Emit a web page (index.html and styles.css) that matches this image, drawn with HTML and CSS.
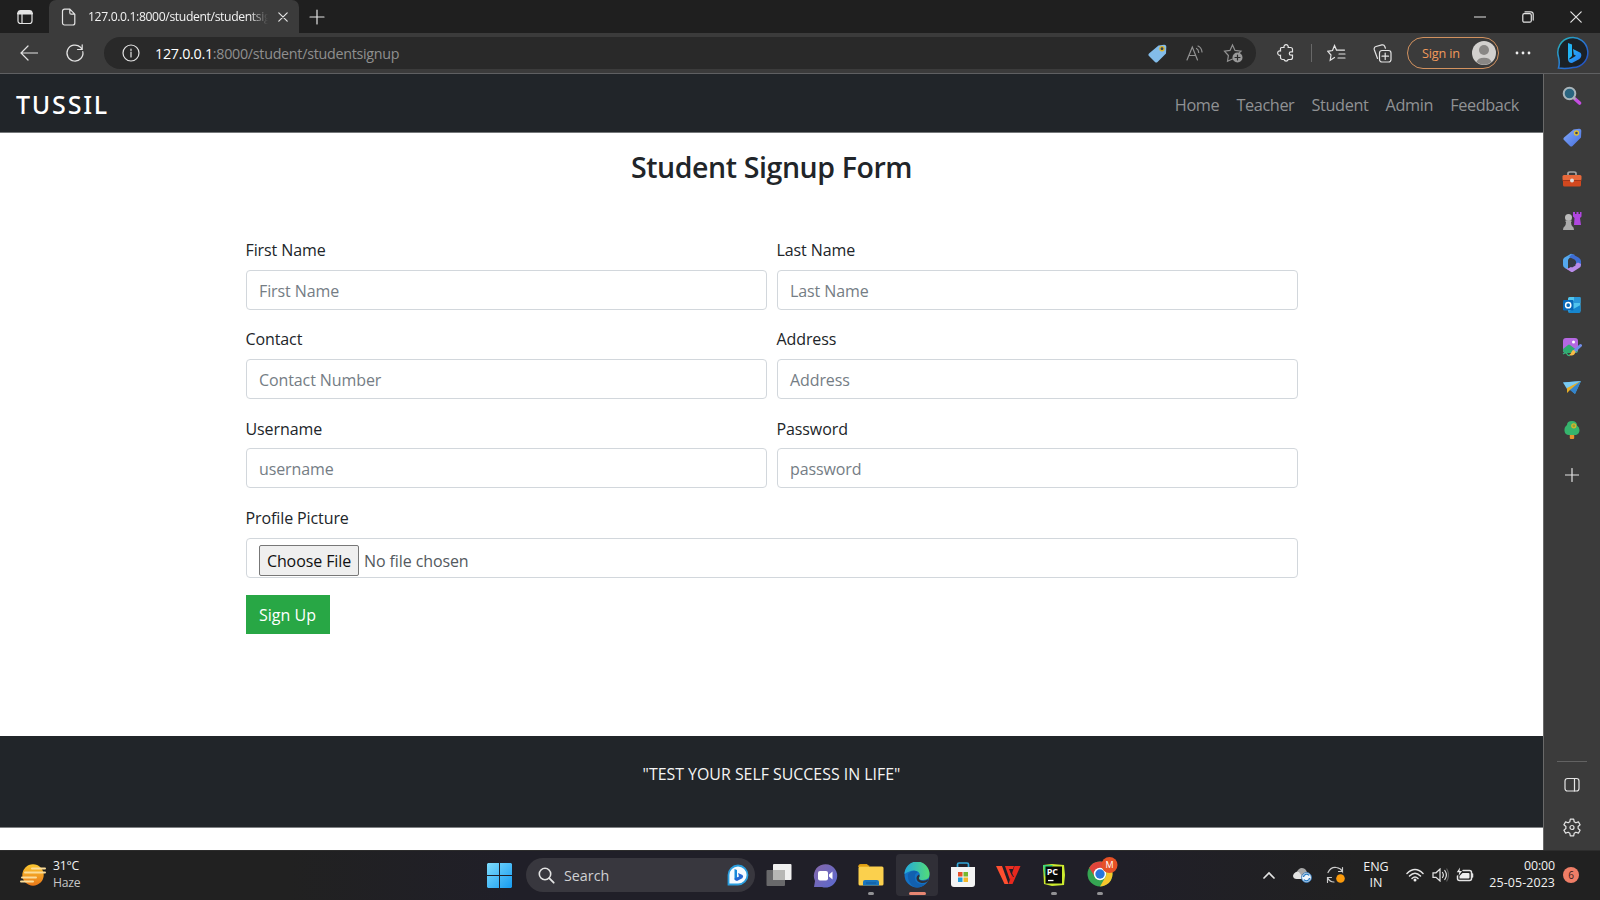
FILE: index.html
```html
<!DOCTYPE html>
<html lang="en">
<head>
<meta charset="utf-8">
<title>Student Signup</title>
<link rel="stylesheet" href="styles.css">
</head>
<body>
<div class="screen">
  <header class="titlebar">
    <div class="workspace"><svg width="18" height="18" viewBox="0 0 18 18" class="line"><rect x="2" y="2.500" width="14" height="13" rx="2.500"/><path d="M2 5.500h14M3 4h12" stroke-width="2"/><path d="M6 6v9"/></svg></div>
    <div class="tab">
      <svg width="16" height="18" viewBox="0 0 16 18" class="line"><path d="M3.500 1.200h5.300l5 5v8.800a2 2 0 0 1-2 2H3.500a2 2 0 0 1-2-2V3.200a2 2 0 0 1 2-2zM8.800 1.400v3.300a1.500 1.500 0 0 0 1.500 1.500h3.400"/></svg>
      <span class="tab-title">127.0.0.1:8000/student/studentsignup</span>
      <svg width="10" height="10" viewBox="0 0 10 10" class="line"><path d="M.8.8l8.400 8.400M9.200.8L.8 9.200"/></svg>
    </div>
    <svg class="newtab line" width="16" height="16" viewBox="0 0 16 16"><path d="M8 1v14M1 8h14"/></svg>
    <div class="caption">
      <span><svg width="12" height="12" viewBox="0 0 12 12" class="line"><path d="M.5 6h11"/></svg></span>
      <span><svg width="12" height="12" viewBox="0 0 12 12" class="line"><rect x=".8" y="2.700" width="8.500" height="8.500" rx="1.500"/><path d="M3 .9h6a2.200 2.200 0 0 1 2.200 2.200v6"/></svg></span>
      <span><svg width="12" height="12" viewBox="0 0 12 12" class="line"><path d="M.8.8l10.400 10.400M11.200.8L.8 11.200"/></svg></span>
    </div>
  </header>

  <div class="toolbar">
    <span class="tool back"><svg width="18" height="16" viewBox="0 0 18 16" class="line"><path d="M17.500 8H1M8 1L1 8l7 7"/></svg></span>
    <span class="tool reload"><svg width="20" height="20" viewBox="0 0 20 20" class="line"><path d="M17.800 8.500A8 8 0 1 1 15.500 4.300L17 6M17.200 1.800V6.500H12.500"/></svg></span>
    <div class="address">
      <svg width="18" height="18" viewBox="0 0 18 18" class="line"><circle cx="9" cy="9" r="8"/><path d="M9 8v5M9 5v1.500"/></svg>
      <span class="url"><b>127.0.0.1</b>:8000/student/studentsignup</span>
      <div class="address-icons">
        <span><svg width="19" height="19" viewBox="0 0 19 19"><path d="M10.500 1.500L16 .8a2 2 0 0 1 2.300 2.200L18 9.500 9.500 18a1.800 1.800 0 0 1-2.500 0L1 12a1.800 1.800 0 0 1 0-2.500z" fill="#83bce9"/><circle cx="14" cy="4.700" r="2.100" fill="#2c4255" stroke="#e0b52c" stroke-width="1.300"/></svg></span>
        <span><svg width="18" height="18" viewBox="0 0 18 18" class="line dim"><path d="M1 16L6.300 3 11.500 16M3 11.500h6.800M10.500 4.500q2 1 2.200 4M12 2q3.500 1.500 4 6"/></svg></span>
        <span><svg width="20" height="20" viewBox="0 0 20 20" class="line dim"><path d="M9.500 16l-5 2.200.9-5.700L1.500 8.200l5.500-.8L9.500 2 12 7.400l6 .8-2 2"/><circle cx="14.500" cy="14.500" r="5" fill="#999" stroke="none"/><path d="M14.500 12v5M12 14.500h5" stroke="#292929"/></svg></span>
      </div>
    </div>
    <span class="tool ext"><svg width="18" height="18" viewBox="0 0 18 18" class="line"><path d="M4.500 3.500H7a2.200 2.200 0 1 1 4.200 0h2.300a2 2 0 0 1 2 2v2.300H14a1.700 1.700 0 0 0 0 3.400h1.500v2.300a2 2 0 0 1-2 2h-2.300a2.200 2.200 0 0 1-4.200 0H5.500a2 2 0 0 1-2-2v-2.300a2.200 2.200 0 1 1 0-4.200V4.500a1 1 0 0 1 1-1z"/></svg></span>
    <i class="sep"></i>
    <span class="tool fav"><svg width="19" height="18" viewBox="0 0 19 18" class="line"><path d="M7.500 13.500l-4.300 2.700.8-5.200L.8 7.300l4.700-.8L7.500 1.500l2 4.600h8M12 10h6M11 14h7"/></svg></span>
    <span class="tool coll"><svg width="19" height="19" viewBox="0 0 19 19" class="line"><rect x="6.500" y="6.500" width="11.500" height="11.500" rx="2.500"/><path d="M12.200 9v6.500M9 12.200h6.500M4.500 14.500L1.300 5.700a2.500 2.500 0 0 1 1.700-3.200l5.800-1.600a2.500 2.500 0 0 1 3 1.600l.6 1.700"/></svg></span>
    <div class="signin"><span>Sign in</span>
      <svg width="24" height="24" viewBox="0 0 24 24"><circle cx="12" cy="12" r="12" fill="#d2d0ce"/><circle cx="12" cy="9" r="5" fill="#898785"/><path d="M4.500 21a7.700 5.500 0 0 1 15 0A12 12 0 0 1 4.500 21z" fill="#898785"/></svg></div>
    <span class="tool dots"><svg width="16" height="4" viewBox="0 0 16 4" fill="#eee"><circle cx="2" cy="2" r="1.400"/><circle cx="8" cy="2" r="1.400"/><circle cx="14" cy="2" r="1.400"/></svg></span>
    <span class="tool bing"><svg width="32" height="34" viewBox="0 0 32 34"><defs><linearGradient id="ring" x2="1" y2="1"><stop stop-color="#28bbb9"/><stop offset=".5" stop-color="#2878d3"/><stop offset="1" stop-color="#2148bd"/></linearGradient><linearGradient id="bb" x2="1" y2="1"><stop stop-color="#25b9fa"/><stop offset="1" stop-color="#277af0"/></linearGradient></defs><path d="M1.500 32Q3 27 1.500 21A15 15 0 1 1 16 31.500Q9 33 1.500 32z" fill="#1b2127" stroke="url(#ring)" stroke-width="1.500"/><path d="M11 7l4 1.500v11.500l-4 4z" fill="#21b4f5"/><path d="M16 13l7 3.500q2 1.500 1 4.500-.7 1.500-2 2.300L15 27q-4 0-4-4.200 1.500 1 4-.6l4-2.400-2.200-1.400z" fill="url(#bb)"/></svg></span>
  </div>

  <div class="middle">
    <main class="page">
      <nav class="navbar">
        <span class="brand">TUSSIL</span>
        <div class="links"><a>Home</a><a>Teacher</a><a>Student</a><a>Admin</a><a>Feedback</a></div>
      </nav>
      <section class="content">
        <h3>Student Signup Form</h3>
        <form class="form">
          <div class="group"><label>First Name</label><div class="input">First Name</div></div>
          <div class="group"><label>Last Name</label><div class="input">Last Name</div></div>
          <div class="group"><label>Contact</label><div class="input">Contact Number</div></div>
          <div class="group"><label>Address</label><div class="input">Address</div></div>
          <div class="group"><label>Username</label><div class="input">username</div></div>
          <div class="group"><label>Password</label><div class="input">password</div></div>
          <div class="group wide"><label>Profile Picture</label><div class="input file"><span class="choose">Choose File</span><span class="nofile">No file chosen</span></div></div>
          <div class="submit">Sign Up</div>
        </form>
      </section>
      <footer class="footer">"TEST YOUR SELF SUCCESS IN LIFE"</footer>
    </main>
    <aside class="sidebar">
      <span><svg width="20" height="20" viewBox="0 0 20 20"><path d="M13 13l4.500 4" stroke="#c44ce0" stroke-width="3.600" stroke-linecap="round"/><path d="M11.500 11.500l2 2" stroke="#aaa" stroke-width="2"/><circle cx="7.500" cy="7.500" r="5.800" fill="#2a6580" stroke="#a9b5bb" stroke-width="2"/></svg></span>
      <span><svg width="19" height="19" viewBox="0 0 19 19"><defs><linearGradient id="tg" x2="1" y2="1"><stop stop-color="#83a9fa"/><stop offset="1" stop-color="#4770dd"/></linearGradient></defs><path d="M10.500 1.500L16 .8a2 2 0 0 1 2.300 2.200L18 9.500 9.500 18a1.800 1.800 0 0 1-2.500 0L1 12a1.800 1.800 0 0 1 0-2.500z" fill="url(#tg)"/><circle cx="13.500" cy="5" r="2" fill="#384164" stroke="#dfc02f" stroke-width="1.400"/></svg></span>
      <span><svg width="20" height="18" viewBox="0 0 20 18"><path d="M6 5V3.500Q6 2 8 2h4q2 0 2 1.500V5" fill="none" stroke="#a4a4a4" stroke-width="1.700"/><rect x="1" y="8" width="18" height="8.500" rx="1.500" fill="#d2481f"/><rect x=".5" y="5" width="19" height="5.500" rx="1.500" fill="#e8683a"/><rect x=".5" y="10" width="19" height="1" fill="#a5361a"/><circle cx="10" cy="10.500" r="2" fill="#ddd"/></svg></span>
      <span><svg width="20" height="20" viewBox="0 0 20 20"><path d="M11 1h2v2h1.500V1h2v2H18V1h1.500v4.500L18 7l1 7h-7l.5-7L11 5.500z" fill="#b046e0"/><circle cx="6.500" cy="6.500" r="3.500" fill="#bbb"/><path d="M3.500 9.500h6v1.500H9q0 3 1.500 4.500 1.500.5 1.500 3.500H1q0-3 1.500-3.500Q4 14 4 11h-.5z" fill="#aaa"/></svg></span>
      <span><svg width="20" height="20" viewBox="0 0 20 20"><path d="M9 .8L2.500 4.500Q1 5.500 1 7v5q0 2 2 3l3 1.500V7.500Q6 6 7.500 5L13 2z" fill="#54a8ee"/><path d="M10 1l6.500 3.500Q19 6 19 8v5l-5 3V9q0-1.500-1.500-2.500L7 4z" fill="#3e6dd4"/><path d="M19 11q0 3-2 4l-5.500 3.500q-1.500 1-3 0L3 15q3 1 5-.5l8-5z" fill="#b98be9"/><path d="M10 6.500l3.500 2v4L10 14.500l-3.500-2v-4z" fill="#343a45"/></svg></span>
      <span><svg width="18" height="18" viewBox="0 0 18 18"><rect x="5" y="1" width="12.500" height="15" rx="1.500" fill="#50c4ee"/><path d="M11 1h6.500v6H11z" fill="#2997d9"/><path d="M5 16l12.500-7v6.500q0 1.500-1.500 1.500H6z" fill="#1686ce"/><rect x="0" y="4" width="10.500" height="10.500" rx="1.200" fill="#0869b9"/><circle cx="5.200" cy="9.200" r="2.600" fill="none" stroke="#fff" stroke-width="1.500"/></svg></span>
      <span><svg width="20" height="20" viewBox="0 0 20 20"><rect x="1" y="1" width="15" height="15" rx="3" fill="#b568e2"/><path d="M1 12l5-4q1-.8 2 0l8 6q-.5 2-2.500 2H3.500Q1 16 1 13z" fill="#2eac70"/><circle cx="11.500" cy="5" r="1.500" fill="#fff"/><path d="M18.500 8.500l-7 6.500" stroke="#718eea" stroke-width="3" stroke-linecap="round"/><path d="M12 13q-2 0-2.500 2t-2.500 3q5 2 6.500-3z" fill="#f8ba47"/><path d="M1 17q3-2 4 0t3 1.500" fill="none" stroke="#36ba7d" stroke-width="1.200"/></svg></span>
      <span><svg width="20" height="16" viewBox="0 0 20 16"><path d="M1 2.500l18-1.500-6 13-4.500-4z" fill="#439ee0"/><path d="M1 2.500l18-1.500L5 9z" fill="#79caf2"/><path d="M19 1L5 8v5l3-3z" fill="#e5ad27"/><path d="M19 1L8 10l5 4z" fill="#3484cb"/></svg></span>
      <span><svg width="18" height="20" viewBox="0 0 18 20"><rect x="6.800" y="13" width="4.400" height="6" rx="1" fill="#e8922c"/><path d="M9 1Q4 1 4 5 1 7 1.500 11 2 15 6 15h7q3.500-1 3.500-5Q16.500 7 14 5.500 14 1 9 1z" fill="#36b46d"/><circle cx="10.800" cy="5.800" r="2" fill="#8aa53a" stroke="#d4b32d" stroke-width="1.300"/></svg></span>
      <span class="plus"><svg width="14" height="14" viewBox="0 0 14 14" class="line"><path d="M7 .5v13M.5 7h13"/></svg></span>
      <hr>
      <span class="panel"><svg width="16" height="16" viewBox="0 0 16 16" class="line"><rect x="1" y="1.500" width="14" height="12.500" rx="2.500"/><path d="M10.500 1.500v12.500"/></svg></span>
      <span class="gear"><svg width="18" height="19" viewBox="0 0 18 19" class="line"><path d="M7.300 1.200h3.400l.5 2.600 1.700 1 2.500-.9 1.700 2.900-2 1.700v2l2 1.700-1.700 2.900-2.500-.9-1.700 1-.5 2.600H7.300l-.5-2.600-1.700-1-2.500.9-1.700-2.900 2-1.700v-2l-2-1.700 1.700-2.900 2.500.9 1.700-1z" stroke-linejoin="round"/><circle cx="9" cy="9.500" r="2"/></svg></span>
    </aside>
  </div>

  <div class="taskbar">
    <div class="weather">
      <svg width="26" height="24" viewBox="0 0 26 24"><defs><linearGradient id="sun" x2="0" y2="1"><stop stop-color="#fac72f"/><stop offset="1" stop-color="#e97718"/></linearGradient></defs><circle cx="13" cy="12" r="10.700" fill="url(#sun)"/><path d="M12 5.500h13M5 9.500h20M2 14.500h14M1 18.500h12" stroke="#fbdc98" stroke-width="2" stroke-linecap="round"/></svg>
      <div class="weather-text"><div>31°C</div><div class="haze">Haze</div></div>
    </div>
    <svg width="25" height="25" viewBox="0 0 25 25"><defs><linearGradient id="win" x2="1" y2="1"><stop stop-color="#7edcfc"/><stop offset="1" stop-color="#169bf1"/></linearGradient></defs><path d="M1 0h11v12H0V1zM13 0h11l1 1v11H13zM0 13h12v12H1l-1-1zM13 13h12v11l-1 1H13z" fill="url(#win)"/></svg>
    <div class="search">
      <svg width="17" height="17" viewBox="0 0 17 17" class="line"><circle cx="7" cy="7" r="5.700" stroke-width="1.600"/><path d="M11.200 11.200l4.500 4.500" stroke-width="1.800"/></svg>
      <span>Search</span>
      <svg width="22" height="22" viewBox="0 0 22 22"><path d="M1.500 20.500V11A9.500 9.500 0 1 1 11 20.500z" fill="#f5fbff" stroke="#299ddd" stroke-width="1.800"/><path d="M7.500 5l2.500 1v8l-2.500 2z" fill="#1689da"/><path d="M11 9l4.500 2q1.500 1.500-.2 3.300L10 17q-2.500 0-2.500-2.400l4.500-2z" fill="#2468d3"/></svg>
    </div>
    <div class="apps">
      <span><svg width="26" height="24" viewBox="0 0 26 24"><rect x="7" y="1" width="18.500" height="16" rx="1" fill="#f0f0f0"/><rect x=".5" y="7" width="18.500" height="16" rx="1" fill="#777" opacity=".85"/><rect x="7" y="7" width="12" height="10" fill="#b7b7b5"/></svg></span>
      <span><svg width="25" height="25" viewBox="0 0 25 25"><defs><linearGradient id="chat" x2="1" y2="1"><stop stop-color="#8667a9"/><stop offset="1" stop-color="#5969cf"/></linearGradient></defs><path d="M1 24l1-6A11.700 11.700 0 1 1 9 24z" fill="url(#chat)"/><rect x="5" y="8" width="10" height="9.500" rx="2" fill="#fff"/><path d="M16 11.500l3.500-3v8l-3.500-3z" fill="#fff"/></svg></span>
      <span class="open"><svg width="26" height="24" viewBox="0 0 26 24"><path d="M.5 3q0-2 2-2H9l2.500 3H0z" fill="#d99b13"/><rect x=".5" y="3.500" width="25" height="19" rx="1.500" fill="#fbd04d"/><path d="M.5 3.500h9l2.500-1H.5z" fill="#e9a919"/><path d="M5 22.500V19q0-2 2-2h12q2 0 2 2v3.500z" fill="#1975bd"/><path d="M8 20h10" stroke="#115898"/></svg></span>
      <span class="active"><svg width="26" height="26" viewBox="0 0 26 26"><defs><linearGradient id="ed" x2="1"><stop stop-color="#23a8dd"/><stop offset="1" stop-color="#53dc77"/></linearGradient></defs><circle cx="13" cy="13" r="12.500" fill="#1472c5"/><path d="M.5 12A12.500 12.500 0 0 1 25.500 12q.2 6-6.500 6-5 0-4-2.500 2-3-.5-5.500Q9 6 .5 12z" fill="url(#ed)"/><path d="M15 15.500q-.5 3.500 4.500 3.300 3-.3 5-1.800l-1 2.500q-3 1.800-6 1.500-5-1-5-5 0-2.500 2.500-3.500 1.200 1.500 0 3z" fill="#302f37"/><path d="M11 16q-1-4 3-6Q9 6.500 4 12q-1 8 6 13 7 1.500 11.500-3Q11 23 11 16z" fill="#1260af"/></svg></span>
      <span><svg width="26" height="26" viewBox="0 0 26 26"><path d="M7.500 6V2.500q0-1.500 1.500-1.500h8q1.500 0 1.500 1.500V6" fill="none" stroke="#31a6d8" stroke-width="1.700"/><path d="M1 5h24v17q0 3-3 3H4q-3 0-3-3z" fill="#f4f4f4"/><path d="M8 10h4.500v4.500H8z" fill="#e8502a"/><path d="M13.500 10H18v4.500h-4.500z" fill="#77b82f"/><path d="M8 15.500h4.500V20H8z" fill="#209ddb"/><path d="M13.500 15.500H18V20h-4.500z" fill="#f4b928"/></svg></span>
      <span><svg width="26" height="22" viewBox="0 0 26 22"><path d="M10 2h9l-1 3h-4l3 7-2 4z" fill="#ed3023"/><path d="M13.500 20l6-18H25.500L17.500 20z" fill="#e8281e"/><path d="M1 2h6l6.500 18H9.500z" fill="#ff4f30"/><path d="M16 8l2.500 5" stroke="#22212a" stroke-width="1"/></svg></span>
      <span class="open"><svg width="24" height="24" viewBox="0 0 24 24"><path d="M1 2l9-1 12 1 1 10-1 10-12 1-8-2z" fill="#cdeb2f"/><path d="M1 2h10L3 14z" fill="#3bd879"/><rect x="3.500" y="3.500" width="16.500" height="17" fill="#080908"/><path d="M6 17.500h5.500" stroke="#fff" stroke-width="1.300"/><text x="4.700" y="11.500" class="pc">PC</text></svg></span>
      <span class="open"><svg class="chrome" width="31" height="31" viewBox="0 0 31 31"><circle cx="13" cy="17" r="12.500" fill="#35a552"/><path d="M2.200 10.800A12.500 12.500 0 0 1 24 11H13L8 20z" fill="#df453b"/><path d="M24 11a12.500 12.500 0 0 1-11 18.500L19 19q1.500-4-2-8z" fill="#f6c62c"/><circle cx="13" cy="17" r="6.200" fill="#fff"/><circle cx="13" cy="17" r="4.700" fill="#2875dc"/><circle cx="22.500" cy="8" r="8" fill="#e65126"/><text x="18.600" y="11" class="m">M</text></svg></span>
    </div>
    <div class="tray">
      <span class="t-chev"><svg width="12" height="8" viewBox="0 0 12 8" class="line"><path d="M1 7l5-5 5 5" stroke-width="1.700"/></svg></span>
      <span class="t-cloud"><svg width="20" height="16" viewBox="0 0 20 16"><path d="M4 12a4 4 0 0 1 0-7.500Q7-1 12 2q2 2 2 3.500Q17 7 16 12z" fill="#a8a8a8"/><path d="M0 8.500Q2 4 6 5l5 7H4q-4 0-4-3.500z" fill="#e3e3e3"/><circle cx="13.500" cy="10.500" r="4.900" fill="#eff6fc" stroke="#3578b7"/><path d="M10.500 10a3 3 0 0 1 5.500-1.500M16.500 11a3 3 0 0 1-5.500 1.500" fill="none" stroke="#2177c1" stroke-width="1.300"/></svg></span>
      <span class="t-sync"><svg width="20" height="20" viewBox="0 0 20 20" class="line"><path d="M2 7.500Q5 1.500 10.500 2.500q4 .5 6 4V2.500M16.500 6.500h-4M1.500 17.500V12.500h4M1.500 12.500q2 4.500 6.500 4.500" stroke="#ccc"/><circle cx="14.500" cy="13.500" r="4.300" fill="#fb9b0c" stroke="none"/></svg></span>
      <div class="lang"><span>ENG</span><span>IN</span></div>
      <span class="t-wifi"><svg width="18" height="14" viewBox="0 0 18 14" class="line"><path d="M1 5.500q8-8 16 0M3.500 8q5.500-5.500 11 0M6 10.500q3-3 6 0" stroke-width="1.500"/><circle cx="9" cy="12" r="1.500" fill="#eee" stroke="none"/></svg></span>
      <span class="t-vol"><svg width="17" height="14" viewBox="0 0 17 14" class="line"><path d="M1 4.800h3L8 1v12L4 9.300H1zM10.500 4.500q1.700 2.500 0 5M12.800 2.500q3.200 4.500 0 9"/><path d="M14.800 1q3.400 6 0 12" opacity=".3"/></svg></span>
      <span class="t-bat"><svg width="18" height="16" viewBox="0 0 18 16" class="line"><path d="M7 3.500h6.500q2 0 2 2v6q0 2-2 2h-10q-2 0-2-2V9M16.500 7v3" stroke-width="1.500"/><path d="M6.500 6h6q1 0 1 1v3.500q0 1-1 1H3.500V9z" fill="#eee" stroke="none"/><path d="M4 .5L.8 5.200h2.500L2.500 9 6 4H3.500z" fill="#eee" stroke="none"/></svg></span>
      <div class="clock"><span>00:00</span><span class="date">25-05-2023</span></div>
      <span class="badge">6</span>
    </div>
  </div>
</div>
</body>
</html>
```
FILE: styles.css
```css
* { box-sizing: border-box; }
body { margin: 0; width: 1600px; height: 900px; overflow: hidden; font-family: "Open Sans", "Noto Sans", sans-serif; }
svg { display: block; flex: none; }
.line { fill: none; stroke: #e4e4e4; stroke-width: 1.2; stroke-linecap: round; }
.line.dim { stroke: #929292; }
.screen { display: flex; flex-direction: column; width: 1600px; height: 900px; }

.titlebar { height: 33px; background: #1f1f1f; display: flex; align-items: center; flex: none; }
.workspace { width: 49px; height: 33px; padding: 8px 0 0 16px; }
.tab { width: 250px; height: 33px; background: #3b3b3b; border-radius: 7px 7px 0 0; display: flex; align-items: center; padding-left: 12px; }
.tab-title { width: 180px; margin-left: 11px; margin-right: 10px; overflow: hidden; white-space: nowrap; font-size: 12.2px; letter-spacing: -0.37px; color: #f2f2f2; mask-image: linear-gradient(90deg, #000 90%, transparent); }
.newtab { margin-left: 10px; }
.caption { margin-left: auto; display: flex; }
.caption span { width: 48px; display: flex; justify-content: center; }

.toolbar { height: 41px; background: #3b3b3b; border-bottom: 1px solid #5f6062; display: flex; align-items: center; flex: none; }
.toolbar > * { flex: none; }
.tool { display: flex; justify-content: center; }
.back { width: 58px; }
.reload { width: 34px; }
.address { width: 1152px; height: 32px; margin-left: 12px; background: #292929; border-radius: 16px; display: flex; align-items: center; padding-left: 18px; }
.url { margin-left: 15px; font-size: 14.3px; letter-spacing: -0.28px; color: #8f8f8f; }
.url b { font-weight: 400; color: #fff; }
.address-icons { margin-left: auto; display: flex; padding-right: 4px; }
.address-icons span { width: 38px; display: flex; justify-content: center; align-items: center; }
.ext { width: 55px; padding-left: 4px; }
.sep { width: 1px; height: 18px; background: #686868; }
.fav { width: 49px; }
.coll { width: 42px; }
.signin { width: 92px; height: 32px; margin-left: 4px; border: 1.5px solid #d2925f; border-radius: 16px; display: flex; align-items: center; justify-content: space-between; padding: 0 2px 0 14px; font-size: 12.7px; color: #f09a5c; letter-spacing: -0.2px; }
.dots { width: 48px; }
.bing { width: 51px; }

.middle { display: flex; height: 776px; flex: none; }
.page { width: 1543px; background: #fff; display: flex; flex-direction: column; color: #212529; }
.navbar { height: 59px; flex: none; background: #212529; display: flex; justify-content: space-between; align-items: center; padding: 0 24px 0 16px; border-bottom: 1px solid #75787a; }
.brand { font: 500 25px/31px "Noto Sans", sans-serif; color: #fff; letter-spacing: 1.8px; padding-top: 2px; }
.links { display: flex; gap: 17.2px; font-size: 16.3px; letter-spacing: -0.4px; color: #909294; padding-top: 3px; }
.content { height: 603px; display: flex; flex-direction: column; align-items: center; }
h3 { margin: 14px 0 0; font-size: 28.5px; line-height: 40px; font-weight: 600; letter-spacing: -0.4px; }
.form { width: 1052px; margin-top: 51px; display: grid; grid-template-columns: 1fr 1fr; column-gap: 10px; row-gap: 17.8px; font-size: 16px; letter-spacing: -0.1px; }
.group { height: 71.6px; }
.wide { grid-column: 1 / 3; }
label { display: block; height: 31.6px; line-height: 25px; }
.input { height: 40px; border: 1px solid #d2d7dc; border-radius: 4px; padding: 1px 12.500px 0; line-height: 38px; color: #757d85; }
.file { display: flex; align-items: flex-end; padding-bottom: 1px; color: #54595e; }
.choose { width: 100px; height: 31px; border: 1px solid #777; border-radius: 2px; background: #efefef; color: #111; line-height: 30px; text-align: center; }
.nofile { margin-left: 5px; line-height: 30px; }
.submit { width: 84px; height: 39px; margin-top: -1px; background: #28a745; color: #fff; line-height: 40px; text-align: center; letter-spacing: 0; }
.footer { height: 92px; background: #212529; color: #f4f4f4; text-align: center; line-height: 25px; padding-top: 26px; font-size: 15.900px; border-bottom: 1px solid #808284; }

.sidebar { width: 57px; padding-top: 1px; background: #3b3b3b; border-left: 1px solid #696969; display: flex; flex-direction: column; align-items: center; }
.sidebar span { height: 41.8px; width: 100%; display: flex; align-items: center; justify-content: center; flex: none; }
.sidebar .plus { height: 47px; }
.sidebar hr { width: 30px; margin: 263px 0 2px; border: 0; border-top: 1px solid #626262; }
.sidebar .panel, .sidebar .gear { height: 42px; }

.taskbar { height: 50px; flex: none; background: linear-gradient(90deg, #212121 0 18%, #201f28 32% 70%, #212121 85%); border-top: 1px solid #2d2d2d; display: flex; align-items: center; color: #f2f2f2; }
.taskbar > * { flex: none; }
.weather { width: 487px; padding-left: 20px; display: flex; align-items: center; gap: 7px; font-size: 12.2px; line-height: 16.5px; letter-spacing: -0.2px; }
.weather svg { margin-top: -2px; }
.weather-text { padding-bottom: 2px; }
.haze { color: #c6c6c6; }
.search { width: 229px; height: 34px; margin: -1px 0 0 14px; border-radius: 17px; background: #38373e; display: flex; align-items: center; padding: 0 6px 0 12px; font-size: 14.3px; color: #d0d0d3; }
.search span { flex: 1; margin-left: 9px; }
.apps { display: flex; margin: -1px 0 0 1.5px; }
.apps > span { width: 45.8px; height: 42px; display: flex; align-items: center; justify-content: center; position: relative; }
.apps .active { width: 41.8px; margin: 0 2px; background: #302f37; border-radius: 4px; }
.open::after, .active::after { content: ""; position: absolute; bottom: 1px; left: 50%; width: 6px; margin-left: -3px; height: 3px; border-radius: 2px; background: #929295; }
.active::after { width: 17px; margin-left: -8px; background: #e78672; }
.chrome { margin: -5px 0 0 5px; }
.pc { font: bold 9px "Open Sans", sans-serif; fill: #fff; }
.m { font: 9px "Open Sans", sans-serif; fill: #fff; }
.tray { margin: -1px 0 0 auto; display: flex; align-items: center; padding-right: 21px; }
.tray > span { display: flex; justify-content: center; }
.t-chev { width: 34px; }
.t-cloud { width: 33px; }
.t-sync { width: 34px; }
.lang { width: 46px; display: flex; flex-direction: column; align-items: center; font-size: 12.5px; line-height: 16.5px; }
.t-wifi { width: 32px; }
.t-vol { width: 18px; }
.t-bat { width: 32px; }
.clock { width: 74px; display: flex; flex-direction: column; align-items: flex-end; font-size: 12.4px; line-height: 16.5px; letter-spacing: -0.1px; padding-bottom: 1px; }
.clock .date { letter-spacing: 0.1px; }
.tray .badge { width: 16px; height: 16px; margin-left: 8px; border-radius: 50%; background: #ef7e67; color: #35201c; font-size: 10px; line-height: 16px; }
```
